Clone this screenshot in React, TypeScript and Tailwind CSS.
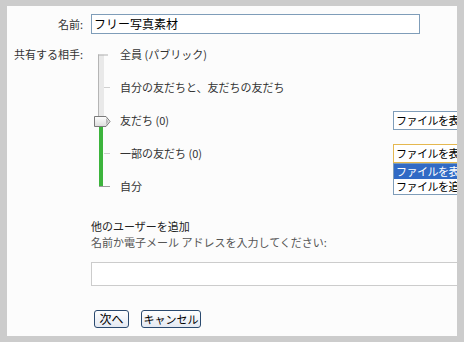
import React from "react";

const font = { fontFamily: '"Noto Sans CJK JP", "Noto Sans", sans-serif' };

const options = [
  { label: "全員 (パブリック)" },
  { label: "自分の友だちと、友だちの友だち" },
  { label: "友だち (0)", select: "normal" },
  { label: "一部の友だち (0)", select: "focus" },
  { label: "自分" },
];

function Slider() {
  return (
    <svg
      className="absolute left-0 top-0"
      width="30"
      height="165"
      viewBox="0 0 30 165"
    >
      {/* track above thumb */}
      <rect x="7" y="16.5" width="6" height="67" fill="#e9e9e9" />
      <line x1="7.5" y1="16.5" x2="7.5" y2="83" stroke="#b5b5b5" />
      {/* green part */}
      <rect x="8" y="83" width="4" height="66" fill="#3cb43c" />
      {/* ticks */}
      <line x1="7" y1="17" x2="17" y2="17" stroke="#b0b0b0" />
      <line x1="13" y1="49.5" x2="19" y2="49.5" stroke="#d0d0d0" />
      <line x1="13" y1="115.5" x2="19" y2="115.5" stroke="#d0d0d0" />
      <line x1="8" y1="148.5" x2="19" y2="148.5" stroke="#9a9a9a" />
      {/* thumb */}
      <defs>
        <linearGradient id="thumb" x1="0" y1="0" x2="0" y2="1">
          <stop offset="0" stopColor="#ffffff" />
          <stop offset="1" stopColor="#dcdcdc" />
        </linearGradient>
      </defs>
      <path
        d="M3.5 78.5 H15 L19 83.5 L15 88.5 H3.5 Z"
        fill="url(#thumb)"
        stroke="#7a7a7a"
      />
      <path d="M15 80 L17.5 83.5 L15 87 Z" fill="#b8b8b8" />
    </svg>
  );
}

export default function App() {
  return (
    <div
      className="w-[464px] h-[342px] bg-[#cccccc] pt-[6px] pl-[7px] text-[11px] text-[#333]"
      style={font}
    >
      <div className="relative w-[450px] h-[330px] bg-[#fcfcfc] overflow-hidden">
        {/* name row */}
        <div className="flex items-center pt-[8px]">
          <div className="w-[76px] shrink-0 text-right">名前:</div>
          <div className="ml-[8px] w-[329px] h-[20px] border border-[#7f9db9] bg-white pl-[2px] flex items-center text-[12px] text-black">
            フリー写真素材
          </div>
        </div>

        {/* share row */}
        <div className="flex mt-[4px]">
          <div className="w-[76px] shrink-0 h-[33px] flex items-center justify-end whitespace-nowrap">
            共有する相手:
          </div>
          <div className="relative ml-[8px] flex-1 min-w-0">
            <Slider />
            {options.map((o) => (
              <div key={o.label} className="h-[33px] flex items-center pl-[29px]">
                <span className="w-[273px] shrink-0 whitespace-nowrap">{o.label}</span>
                {o.select === "normal" && (
                  <div className="w-[80px] h-[19px] shrink-0 border border-[#7f9db9] bg-white pl-[2px] flex items-center text-[11px] tracking-[-0.5px] text-black whitespace-nowrap">
                    ファイルを表示
                  </div>
                )}
                {o.select === "focus" && (
                  <div className="relative w-[80px] h-[19px] shrink-0">
                    <div className="h-[19px] border border-[#e5b84f] bg-white pl-[2px] flex items-center text-[11px] tracking-[-0.5px] text-black whitespace-nowrap">
                      ファイルを表示
                    </div>
                    <div className="absolute left-0 top-[19px] w-[80px] border border-[#7f9db9] bg-white text-[11px] tracking-[-0.5px] whitespace-nowrap">
                      <div className="h-[15px] bg-[#316ac5] text-white pl-[2px] flex items-center">
                        ファイルを表示
                      </div>
                      <div className="h-[15px] text-black pl-[2px] flex items-center">
                        ファイルを追加
                      </div>
                    </div>
                  </div>
                )}
              </div>
            ))}
          </div>
        </div>

        {/* add users */}
        <div className="pl-[84px] mt-[15px]">
          <div className="leading-[16px] text-[#222]">他のユーザーを追加</div>
          <div className="leading-[16px] text-[#555]">
            名前か電子メール アドレスを入力してください:
          </div>
          <div className="mt-[12px] w-[380px] h-[24px] border border-[#cccccc] bg-white" />
          <div className="mt-[24px] ml-[3px] flex gap-[12px]">
            <button className="w-[35px] h-[18px] rounded-[3px] border border-[#2b4a6f] bg-gradient-to-b from-white to-[#e4e9f2] text-black text-[12px] flex items-center justify-center leading-none">
              次へ
            </button>
            <button className="w-[60px] h-[18px] rounded-[3px] border border-[#2b4a6f] bg-gradient-to-b from-white to-[#e4e9f2] text-black text-[11px] flex items-center justify-center leading-none">
              キャンセル
            </button>
          </div>
        </div>
      </div>
    </div>
  );
}
